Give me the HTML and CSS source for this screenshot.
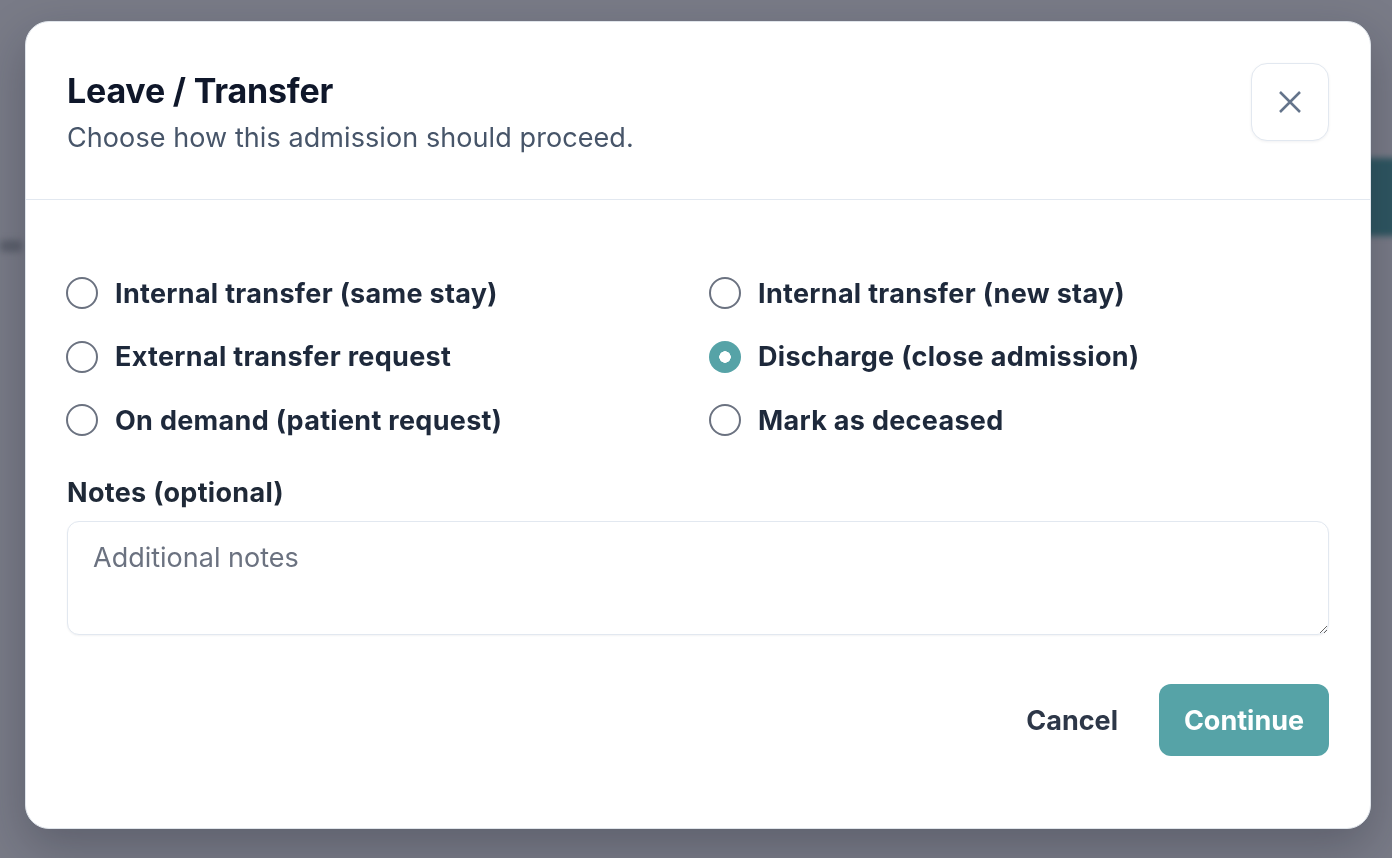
FILE: index.html
```html
<!DOCTYPE html>
<html lang="en">
<head>
<meta charset="utf-8">
<title>Leave / Transfer</title>
<link rel="stylesheet" href="styles.css">
</head>
<body>
<div class="backdrop">
  <div class="bg-bar"></div>
  <div class="bg-smudge"></div>
</div>
<div class="overlay">
  <div class="modal" role="dialog" aria-labelledby="dlg-title">
    <div class="modal-header">
      <div class="heading">
        <h2 class="title" id="dlg-title">Leave / Transfer</h2>
        <p class="subtitle">Choose how this admission should proceed.</p>
      </div>
      <button class="close-btn" aria-label="Close">
        <svg width="22" height="22" viewBox="0 0 22 22" fill="none" stroke="#64748b" stroke-width="2.5"><path d="M1 1L21 21M21 1L1 21"/></svg>
      </button>
    </div>
    <div class="modal-body">
      <div class="options">
        <label class="option"><span class="radio"></span><span class="opt-label">Internal transfer (same stay)</span></label>
        <label class="option"><span class="radio"></span><span class="opt-label">Internal transfer (new stay)</span></label>
        <label class="option"><span class="radio"></span><span class="opt-label">External transfer request</span></label>
        <label class="option"><span class="radio checked"></span><span class="opt-label">Discharge (close admission)</span></label>
        <label class="option"><span class="radio"></span><span class="opt-label">On demand (patient request)</span></label>
        <label class="option"><span class="radio"></span><span class="opt-label">Mark as deceased</span></label>
      </div>
      <div class="notes-label">Notes (optional)</div>
      <textarea class="notes" placeholder="Additional notes"></textarea>
      <div class="footer">
        <button class="btn-cancel">Cancel</button>
        <button class="btn-continue">Continue</button>
      </div>
    </div>
  </div>
</div>
</body>
</html>
```
FILE: styles.css
```css
html, body {
  margin: 0;
  padding: 0;
}
body {
  width: 1392px;
  height: 858px;
  overflow: hidden;
  background: #797b87;
  font-family: Inter, "Noto Sans", "Liberation Sans", sans-serif;
  position: relative;
}
.backdrop {
  position: absolute;
  inset: 0;
  filter: blur(3px);
}
.bg-bar {
  position: absolute;
  left: 1340px;
  top: 158px;
  width: 80px;
  height: 78px;
  background: #2e5661;
  border-radius: 10px;
}
.bg-smudge {
  position: absolute;
  left: 0;
  top: 240px;
  width: 22px;
  height: 12px;
  background: #5c606c;
  border-radius: 4px;
}
.overlay {
  position: relative;
  padding: 21px 0 0 25px;
}
.modal {
  box-sizing: border-box;
  width: 1346px;
  background: #ffffff;
  border: 1px solid #dfe4ea;
  border-radius: 24px;
  box-shadow: 0 18px 48px rgba(20, 24, 40, 0.28);
}
.modal-header {
  display: flex;
  justify-content: space-between;
  align-items: flex-start;
  padding: 41px 41px 41px;
  border-bottom: 1.5px solid #e2e8f0;
}
.title {
  margin: 7px 0 0;
  font-size: 34px;
  line-height: 42px;
  font-weight: 700;
  color: #0f172a;
  letter-spacing: -0.2px;
}
.subtitle {
  margin: 6px 0 0;
  font-size: 27px;
  line-height: 40px;
  color: #475569;
  letter-spacing: 0.08px;
}
.close-btn {
  box-sizing: border-box;
  width: 78px;
  height: 78px;
  display: flex;
  align-items: center;
  justify-content: center;
  background: #fff;
  border: 1.5px solid #e2e8f0;
  border-radius: 16px;
  box-shadow: 0 1px 3px rgba(15, 23, 42, 0.06);
  padding: 0;
  cursor: pointer;
}
.modal-body {
  padding: 73px 41px 72px;
}
.options {
  display: grid;
  grid-template-columns: 1fr 1fr;
  column-gap: 24px;
  row-gap: 23.5px;
}
.option {
  display: flex;
  align-items: center;
  height: 40px;
  gap: 17px;
}
.radio {
  box-sizing: border-box;
  width: 32px;
  height: 32px;
  border: 2px solid #6b7280;
  border-radius: 50%;
  flex: none;
  margin-left: -1px;
}
.radio.checked {
  border: none;
  background: radial-gradient(circle, #ffffff 0 5.5px, #56a3a7 6px);
}
.opt-label {
  font-size: 27px;
  font-weight: 700;
  color: #1e293b;
  letter-spacing: 0.3px;
}
.notes-label {
  margin-top: 35px;
  font-size: 27px;
  line-height: 36px;
  font-weight: 700;
  color: #1f2937;
  letter-spacing: 0.3px;
}
.notes {
  display: block;
  box-sizing: border-box;
  width: 100%;
  height: 114px;
  margin-top: 10px;
  padding: 16px 25px;
  font-family: inherit;
  font-size: 27px;
  line-height: 40px;
  color: #1e293b;
  border: 1.5px solid #e2e8f0;
  border-radius: 12px;
  box-shadow: 0 1px 2px rgba(15, 23, 42, 0.05);
  resize: vertical;
  outline: none;
}
.notes::placeholder {
  color: #6b7280;
}
.footer {
  display: flex;
  justify-content: flex-end;
  align-items: center;
  gap: 17px;
  margin-top: 49px;
}
.btn-cancel {
  height: 72px;
  padding: 0 24px;
  background: none;
  border: none;
  font-family: inherit;
  font-size: 27px;
  font-weight: 700;
  color: #2d3748;
  cursor: pointer;
}
.btn-continue {
  box-sizing: border-box;
  width: 170px;
  height: 72px;
  background: #56a3a7;
  border: none;
  border-radius: 12px;
  font-family: inherit;
  font-size: 27px;
  font-weight: 700;
  color: #ffffff;
  cursor: pointer;
}
```
